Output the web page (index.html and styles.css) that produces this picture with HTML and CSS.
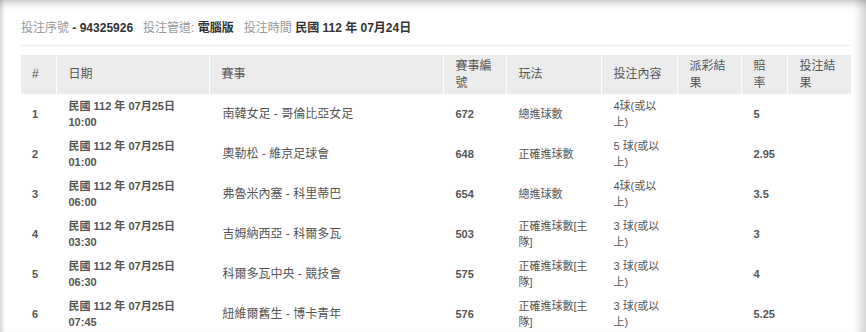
FILE: index.html
```html
<!DOCTYPE html>
<html lang="zh-Hant">
<head>
<meta charset="utf-8">
<title>投注紀錄</title>
<link rel="stylesheet" href="styles.css">
</head>
<body>
<div class="frame">
  <div class="info">
    <span class="item"><span class="label">投注序號</span> <b>- 94325926</b></span>
    <span class="item"><span class="label">投注管道:</span> <b>電腦版</b></span>
    <span class="item"><span class="label">投注時間</span> <b>民國 112 年 07月24日</b></span>
  </div>
  <hr class="sep">
  <table class="bets">
    <colgroup>
      <col class="c-no"><col class="c-date"><col class="c-match"><col class="c-id"><col class="c-type"><col class="c-bet"><col class="c-pay"><col class="c-odds"><col class="c-res">
    </colgroup>
    <thead>
      <tr>
        <th>#</th><th>日期</th><th>賽事</th><th>賽事編號</th><th>玩法</th><th>投注內容</th><th>派彩結果</th><th>賠率</th><th>投注結果</th>
      </tr>
    </thead>
    <tbody>
      <tr>
        <td class="b">1</td><td class="b">民國 112 年 07月25日<br>10:00</td><td class="match">南韓女足 - 哥倫比亞女足</td><td class="b">672</td><td>總進球數</td><td>4球(或以上)</td><td></td><td class="b">5</td><td></td>
      </tr>
      <tr>
        <td class="b">2</td><td class="b">民國 112 年 07月25日<br>01:00</td><td class="match">奧勒松 - 維京足球會</td><td class="b">648</td><td>正確進球數</td><td>5 球(或以上)</td><td></td><td class="b">2.95</td><td></td>
      </tr>
      <tr>
        <td class="b">3</td><td class="b">民國 112 年 07月25日<br>06:00</td><td class="match">弗魯米內塞 - 科里蒂巴</td><td class="b">654</td><td>總進球數</td><td>4球(或以上)</td><td></td><td class="b">3.5</td><td></td>
      </tr>
      <tr>
        <td class="b">4</td><td class="b">民國 112 年 07月25日<br>03:30</td><td class="match">吉姆納西亞 - 科爾多瓦</td><td class="b">503</td><td>正確進球數[主隊]</td><td>3 球(或以上)</td><td></td><td class="b">3</td><td></td>
      </tr>
      <tr>
        <td class="b">5</td><td class="b">民國 112 年 07月25日<br>06:30</td><td class="match">科爾多瓦中央 - 競技會</td><td class="b">575</td><td>正確進球數[主隊]</td><td>3 球(或以上)</td><td></td><td class="b">4</td><td></td>
      </tr>
      <tr>
        <td class="b">6</td><td class="b">民國 112 年 07月25日<br>07:45</td><td class="match">紐維爾舊生 - 博卡青年</td><td class="b">576</td><td>正確進球數[主隊]</td><td>3 球(或以上)</td><td></td><td class="b">5.25</td><td></td>
      </tr>
    </tbody>
  </table>
</div>
</body>
</html>
```
FILE: styles.css
```css
html, body {
  margin: 0;
  padding: 0;
  background: #fff;
}
body {
  font-family: "Liberation Sans", "Noto Sans CJK TC", sans-serif;
  color: #555;
}
.frame {
  width: 866px;
  height: 332px;
  overflow: hidden;
  box-sizing: border-box;
  padding: 20px 15px 0 21px;
  background: #fff;
  box-shadow:
    inset 0 10px 9px -7px rgba(0, 0, 0, 0.22),
    inset 5px 0 4px -3px rgba(0, 0, 0, 0.18),
    inset -12px 0 9px -6px rgba(0, 0, 0, 0.16);
}
.info {
  display: flex;
  gap: 10px;
  font-size: 12px;
  line-height: 17px;
  white-space: nowrap;
}
.info .label {
  color: #999;
}
.info b {
  color: #333;
}
.sep {
  margin: 8px 0 0 -1px;
  border: 0;
  border-top: 1px solid #eee;
  height: 0;
}
.bets {
  margin-top: 9px;
  width: 830px;
  table-layout: fixed;
  border-collapse: collapse;
  font-size: 11px;
}
.c-no { width: 35px; }
.c-date { width: 153px; }
.c-match { width: 234px; }
.c-id { width: 63px; }
.c-type { width: 95px; }
.c-bet { width: 76px; }
.c-pay { width: 64px; }
.c-odds { width: 46px; }
.c-res { width: 64px; }
.bets th {
  background: #ececec;
  font-weight: normal;
  font-size: 12px;
  line-height: 16.6px;
  text-align: left;
  padding: 3px 12px 3px 12px;
  border-left: 1px solid #fff;
  color: #555;
  vertical-align: middle;
}
.bets th:first-child {
  border-left: 0;
  padding-left: 11px;
}
.bets td {
  padding: 4px 12px 4px 12px;
  line-height: 16px;
  vertical-align: middle;
  text-align: left;
  border-left: 1px solid #fff;
}
.bets td:first-child {
  border-left: 0;
  padding-left: 11px;
}
.bets td.b {
  font-weight: bold;
}
.bets td.match {
  font-size: 12px;
  padding-left: 13px;
}
```
